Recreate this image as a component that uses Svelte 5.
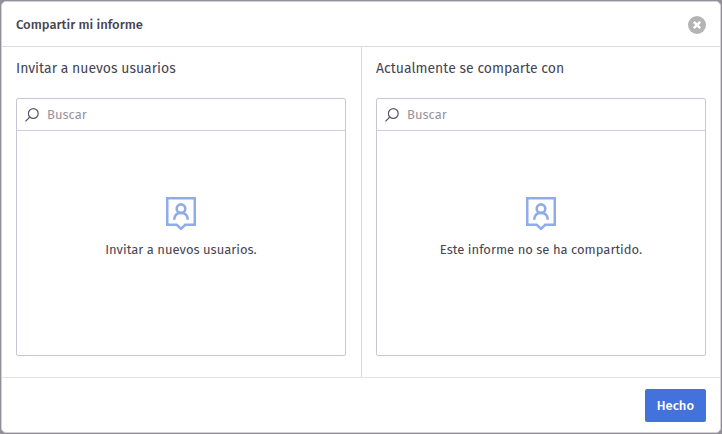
<script>
  let title = 'Compartir mi informe';

  let panels = $state([
    {
      id: 'invite',
      heading: 'Invitar a nuevos usuarios',
      empty: 'Invitar a nuevos usuarios.',
      query: ''
    },
    {
      id: 'shared',
      heading: 'Actualmente se comparte con',
      empty: 'Este informe no se ha compartido.',
      query: ''
    }
  ]);
</script>

<div class="backdrop">
  <div class="dialog" role="dialog" aria-labelledby="dialog-title">
    <header>
      <h1 id="dialog-title">{title}</h1>
      <button class="close" type="button" aria-label="Cerrar">
        <svg width="18" height="18" viewBox="0 0 18 18">
          <circle cx="9" cy="9" r="9" fill="#b4b4b4" />
          <path d="M5.800 5.800l6.400 6.400M12.200 5.800l-6.400 6.400" stroke="#fff" stroke-width="2.4" />
        </svg>
      </button>
    </header>

    <div class="columns">
      {#each panels as panel (panel.id)}
        <section>
          <h2>{panel.heading}</h2>
          <div class="panel">
            <label class="search">
              <svg width="14" height="14" viewBox="0 0 14 14" fill="none" stroke="#58566b" stroke-width="1.2">
                <circle cx="8.3" cy="5.5" r="4.9" />
                <path d="M4.8 9L.5 13.3" />
              </svg>
              <input type="text" placeholder="Buscar" aria-label="Buscar" bind:value={panel.query} />
            </label>
            <div class="empty">
              <svg width="30" height="34" viewBox="0 0 30 34" fill="none" stroke="#8fabe9">
                <path d="M1.25 1.25h27.5v26.5h-9.500L15 31.800l-4.250-4.050h-9.500z" stroke-width="2.5" />
                <circle cx="15" cy="11.700" r="4.300" stroke-width="2.600" />
                <path d="M8.200 22.800c0-4.200 2.700-6.900 6.800-6.900s6.800 2.700 6.800 6.900" stroke-width="2.600" />
              </svg>
              <p>{panel.empty}</p>
            </div>
          </div>
        </section>
      {/each}
    </div>

    <footer>
      <button class="done" type="button">Hecho</button>
    </footer>
  </div>
</div>

<style>
  :global(body) {
    background: #929096;
  }

  .backdrop {
    box-sizing: border-box;
    min-height: 100vh;
    padding: 1px;
    display: flex;
    font-family: "Fira Sans", "Noto Sans", sans-serif;
    color: #464553;
  }

  .dialog {
    flex: 1;
    display: flex;
    flex-direction: column;
    background: #fff;
    border: 1px solid #d3d1dc;
    border-radius: 5px;
  }

  header {
    display: flex;
    align-items: center;
    justify-content: space-between;
    height: 42px;
    padding: 2px 14px 0;
    border-bottom: 1px solid #dad9e6;
  }

  h1 {
    margin: 0;
    font-size: 13px;
    line-height: 18px;
    font-weight: 500;
  }

  button {
    border: 0;
    font-family: inherit;
    cursor: pointer;
  }

  .close {
    padding: 0;
    background: none;
    height: 18px;
  }

  svg {
    display: block;
    flex: none;
  }

  .columns {
    flex: 1;
    display: grid;
    grid-template-columns: 1fr 1fr;
  }

  section {
    display: flex;
    flex-direction: column;
    padding: 12px 14px 21px;
  }

  section:first-child {
    padding-right: 15px;
  }

  section + section {
    border-left: 1px solid #d9d8e5;
  }

  h2 {
    margin: 0 0 19px;
    font-size: 14px;
    line-height: 20px;
    font-weight: 400;
  }

  .panel {
    flex: 1;
    display: flex;
    flex-direction: column;
    border: 1px solid #c8c6d9;
    border-radius: 2px;
  }

  .search {
    display: flex;
    align-items: center;
    gap: 8px;
    height: 31px;
    padding: 0 8px;
    border-bottom: 1px solid #cfcddf;
  }

  input {
    flex: 1;
    min-width: 0;
    padding: 0;
    border: 0;
    outline: 0;
    background: none;
    font-family: inherit;
    font-size: 13px;
    line-height: 18px;
    color: inherit;
  }

  input::placeholder {
    color: #96959f;
    opacity: 1;
  }

  .empty {
    flex: 1;
    display: flex;
    flex-direction: column;
    align-items: center;
    gap: 10px;
    padding-top: 66px;
  }

  p {
    margin: 0;
    font-size: 13px;
    line-height: 18px;
  }

  footer {
    display: flex;
    justify-content: flex-end;
    padding: 11px 14px 10px;
    border-top: 1px solid #e3e3ea;
  }

  .done {
    height: 33px;
    padding: 0 12px;
    border-radius: 2px;
    background: #4472dd;
    color: #fff;
    font-size: 13px;
    font-weight: 500;
  }
</style>
